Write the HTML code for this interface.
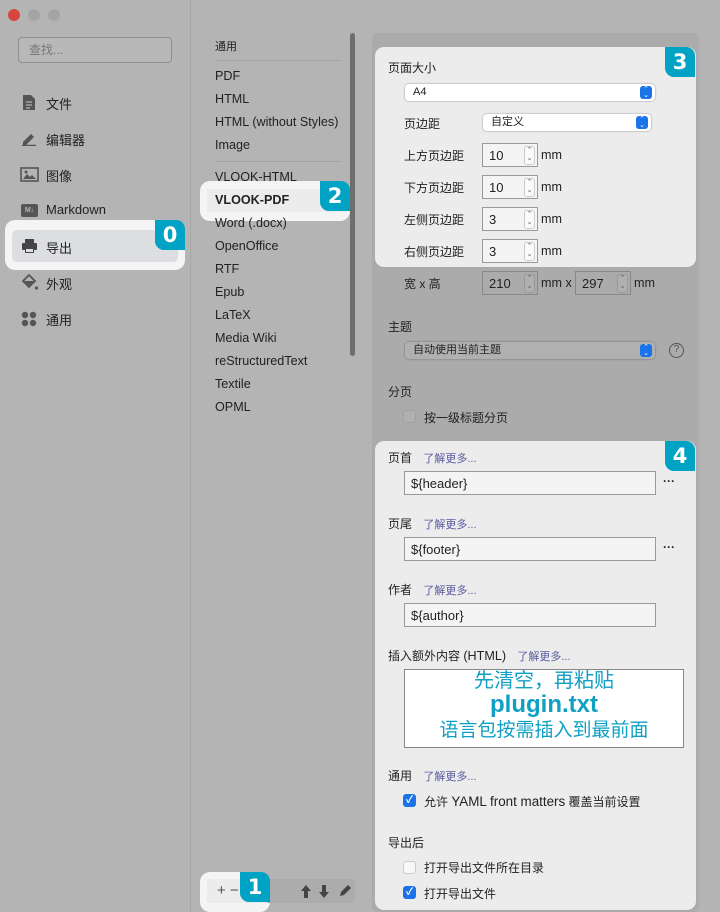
<!DOCTYPE html>
<html><head><meta charset="utf-8"><style>
*{margin:0;padding:0;box-sizing:border-box}
body{width:720px;height:912px;overflow:hidden;background:#b4b4b4;font-family:"Liberation Sans","Noto Sans CJK SC",sans-serif;font-size:12px;color:#222;position:relative}
.a{position:absolute;white-space:nowrap}
.m{font-size:12.6px}
.badge{position:absolute;width:30px;height:30px;background:#00a3c4;color:#fff;font-weight:bold;font-size:21px;text-align:center;line-height:30px;border-radius:0 9px 0 9px;font-family:"DejaVu Sans",sans-serif}
.hl{position:absolute;background:#ececec}
.inp{position:absolute;background:#f4f4f4;border:1px solid #9a9a9a;height:24px;padding-left:6px;line-height:23px;font-size:13px}
.step{position:absolute;width:11px;height:19px;border:1px solid #ccc;border-radius:3px;background:#fafafa;font-size:7px;line-height:8px;text-align:center;color:#555}
.sel{position:absolute;height:17px;background:#fff;border-radius:4px;box-shadow:0 0 1px 1px rgba(0,0,0,.15);padding-left:8px;line-height:17px;font-size:11px}
.sel i{position:absolute;right:3px;top:2px;width:12px;height:13px;border-radius:3px;background:#1a73e8;color:#fff;font-style:normal;font-size:7px;line-height:6px;text-align:center;padding-top:1px}
.link{color:#5a5aa0}
.cb{position:absolute;width:13px;height:13px;border-radius:3px;border:1px solid #ccc;background:#f8f8f8}
.cb.on{background:#1a73e8;border-color:#1a73e8;color:#fff;font-size:10px;line-height:12px;text-align:center;font-weight:bold}
</style></head><body>
<div class="a" style="left:8px;top:9px;width:12px;height:12px;border-radius:50%;background:#d6453f"></div>
<div class="a" style="left:28px;top:9px;width:12px;height:12px;border-radius:50%;background:#a4a4a4"></div>
<div class="a" style="left:48px;top:9px;width:12px;height:12px;border-radius:50%;background:#a4a4a4"></div>
<div class="a" style="left:190px;top:0;width:1px;height:912px;background:#a8a8a8"></div>
<div class="a" style="left:18px;top:37px;width:154px;height:26px;border:1px solid #8f8f8f;border-radius:4px;background:#b8b8b8;color:#777;padding-left:10px;line-height:24px;font-size:12px">查找...</div>
<svg class="a" style="left:22px;top:94px" width="14" height="17"><path d="M1 1h8l4 4v11H1z" fill="#555"/><path d="M4 8h6M4 11h6M4 14h4" stroke="#b4b4b4" stroke-width="1.2"/></svg>
<div class="a" style="left:46px;top:94px;font-size:13px">文件</div>
<svg class="a" style="left:21px;top:131px" width="16" height="15"><path d="M2 11l8-8 3 3-8 8H2z" fill="#555"/><path d="M1 14.5h14" stroke="#555" stroke-width="1.5"/></svg>
<div class="a" style="left:46px;top:130px;font-size:13px">编辑器</div>
<svg class="a" style="left:20px;top:167px" width="19" height="15"><rect x="1" y="1" width="17" height="13" fill="none" stroke="#555" stroke-width="1.6"/><path d="M3 12l4-5 3 3 2-2 4 4z" fill="#555"/><circle cx="6" cy="5" r="1.5" fill="#555"/></svg>
<div class="a" style="left:46px;top:166px;font-size:13px">图像</div>
<div class="a" style="left:21px;top:204px;width:17px;height:13px;background:#555;border-radius:2px;color:#b4b4b4;font-size:7px;font-weight:bold;line-height:13px;text-align:center">M↓</div>
<div class="a" style="left:46px;top:202px;font-size:13px">Markdown</div>
<div class="hl" style="left:5px;top:220px;width:180px;height:50px;border-radius:10px;background:#f4f4f4"></div>
<div class="a" style="left:12px;top:230px;width:166px;height:32px;border-radius:5px;background:#dcdee1"></div>
<svg class="a" style="left:21px;top:238px" width="17" height="16"><rect x="4" y="1" width="9" height="4" fill="#444"/><rect x="1" y="5" width="15" height="7" rx="1" fill="#444"/><rect x="4" y="10" width="9" height="5" fill="#444"/><rect x="5" y="11" width="7" height="3" fill="#dcdee1"/></svg>
<div class="a" style="left:46px;top:238px;font-size:13px">导出</div>
<div class="badge" style="left:155px;top:220px">0</div>
<svg class="a" style="left:21px;top:274px" width="18" height="17"><path d="M8 1l6 6-6 6-6-6z" fill="none" stroke="#555" stroke-width="1.8"/><path d="M2 7h12l-6 6z" fill="#555"/><circle cx="15.5" cy="14" r="1.6" fill="#555"/></svg>
<div class="a" style="left:46px;top:274px;font-size:13px">外观</div>
<svg class="a" style="left:21px;top:311px" width="16" height="16"><circle cx="4" cy="4" r="3.2" fill="#555"/><circle cx="12" cy="4" r="3.2" fill="#555"/><circle cx="4" cy="12" r="3.2" fill="#555"/><circle cx="12" cy="12" r="3.2" fill="#555"/></svg>
<div class="a" style="left:46px;top:310px;font-size:13px">通用</div>
<div class="a" style="left:215px;top:38px;font-size:11px">通用</div>
<div class="a" style="left:215px;top:60px;width:126px;height:1px;background:#a2a2a2"></div>
<div class="a m" style="left:215px;top:69px">PDF</div>
<div class="a m" style="left:215px;top:92px">HTML</div>
<div class="a m" style="left:215px;top:115px">HTML (without Styles)</div>
<div class="a m" style="left:215px;top:138px">Image</div>
<div class="a" style="left:215px;top:161px;width:126px;height:1px;background:#a2a2a2"></div>
<div class="a m" style="left:215px;top:170px">VLOOK-HTML</div>
<div class="hl" style="left:200px;top:181px;width:150px;height:40px;border-radius:10px;background:#f4f4f4"></div>
<div class="a" style="left:207px;top:189px;width:140px;height:23px;background:#ececec"></div>
<div class="a m" style="left:215px;top:193px;font-weight:bold">VLOOK-PDF</div>
<div class="badge" style="left:320px;top:181px">2</div>
<div class="a m" style="left:215px;top:216px">Word (.docx)</div>
<div class="a m" style="left:215px;top:239px">OpenOffice</div>
<div class="a m" style="left:215px;top:262px">RTF</div>
<div class="a m" style="left:215px;top:285px">Epub</div>
<div class="a m" style="left:215px;top:308px">LaTeX</div>
<div class="a m" style="left:215px;top:331px">Media Wiki</div>
<div class="a m" style="left:215px;top:354px">reStructuredText</div>
<div class="a m" style="left:215px;top:377px">Textile</div>
<div class="a m" style="left:215px;top:400px">OPML</div>
<div class="a" style="left:350px;top:33px;width:5px;height:323px;border-radius:3px;background:#6e6e6e"></div>
<div class="hl" style="left:200px;top:872px;width:70px;height:40px;border-radius:10px;background:#f4f4f4"></div>
<div class="a" style="left:207px;top:879px;width:148px;height:24px;background:#acacac;border-radius:3px"></div>
<div class="a" style="left:207px;top:879px;width:60px;height:24px;background:#ececec;border-radius:3px 0 0 3px"></div>
<div class="a" style="left:217px;top:882px;font-size:15px;color:#555">+ −</div>
<div class="badge" style="left:240px;top:872px">1</div>
<svg class="a" style="left:300px;top:884px" width="34" height="15"><path d="M6 1l5 6H8v7H4V7H1z M24 14l5-6h-3V1h-4v7h-3z" fill="#444"/></svg>
<svg class="a" style="left:338px;top:884px" width="14" height="14"><path d="M2 12l1-4 7-7 3 3-7 7z" fill="#444"/></svg>
<div class="a" style="left:372px;top:33px;width:327px;height:879px;background:#ababab;border-radius:6px"></div>
<div class="hl" style="left:375px;top:47px;width:321px;height:220px;border-radius:9px"></div>
<div class="badge" style="left:665px;top:47px">3</div>
<div class="a" style="left:388px;top:59px;font-size:12px">页面大小</div>
<div class="sel" style="left:405px;top:84px;width:250px">A4<i>⌃<br>⌄</i></div>
<div class="a" style="left:404px;top:115px">页边距</div>
<div class="sel" style="left:483px;top:114px;width:168px">自定义<i>⌃<br>⌄</i></div>
<div class="a" style="left:404px;top:147px">上方页边距</div>
<div class="inp" style="left:482px;top:143px;width:56px">10</div><div class="step" style="left:524px;top:146px">⌃<br>⌄</div><div class="a m" style="left:541px;top:148px">mm</div>
<div class="a" style="left:404px;top:179px">下方页边距</div>
<div class="inp" style="left:482px;top:175px;width:56px">10</div><div class="step" style="left:524px;top:178px">⌃<br>⌄</div><div class="a m" style="left:541px;top:180px">mm</div>
<div class="a" style="left:404px;top:211px">左侧页边距</div>
<div class="inp" style="left:482px;top:207px;width:56px">3</div><div class="step" style="left:524px;top:210px">⌃<br>⌄</div><div class="a m" style="left:541px;top:212px">mm</div>
<div class="a" style="left:404px;top:243px">右侧页边距</div>
<div class="inp" style="left:482px;top:239px;width:56px">3</div><div class="step" style="left:524px;top:242px">⌃<br>⌄</div><div class="a m" style="left:541px;top:244px">mm</div>
<div class="a" style="left:404px;top:275px">宽 x 高</div>
<div class="inp" style="left:482px;top:271px;width:56px;background:#ababab;border-color:#888">210</div><div class="step" style="left:524px;top:274px;background:#b0b0b0;border-color:#999">⌃<br>⌄</div><div class="a m" style="left:541px;top:276px">mm x</div>
<div class="inp" style="left:575px;top:271px;width:56px;background:#ababab;border-color:#888">297</div><div class="step" style="left:617px;top:274px;background:#b0b0b0;border-color:#999">⌃<br>⌄</div><div class="a m" style="left:634px;top:276px">mm</div>
<div class="a" style="left:388px;top:318px">主题</div>
<div class="sel" style="left:405px;top:342px;width:250px;background:#b0b0b0">自动使用当前主题<i>⌃<br>⌄</i></div>
<div class="a" style="left:669px;top:343px;width:15px;height:15px;border:1.5px solid #555;border-radius:50%;font-size:10px;line-height:12px;text-align:center;color:#555">?</div>
<div class="a" style="left:388px;top:383px">分页</div>
<div class="cb" style="left:403px;top:410px;background:#b0b0b0;border-color:#a0a0a0"></div>
<div class="a" style="left:424px;top:409px">按一级标题分页</div>
<div class="hl" style="left:375px;top:441px;width:321px;height:469px;border-radius:9px"></div>
<div class="badge" style="left:665px;top:441px">4</div>
<div class="a" style="left:388px;top:449px">页首 <span class="link" style="margin-left:8px;font-size:11px">了解更多...</span></div>
<div class="inp" style="left:404px;top:471px;width:252px">${header}</div>
<div class="a" style="left:663px;top:474px;font-weight:bold">···</div>
<div class="a" style="left:388px;top:515px">页尾 <span class="link" style="margin-left:8px;font-size:11px">了解更多...</span></div>
<div class="inp" style="left:404px;top:537px;width:252px">${footer}</div>
<div class="a" style="left:663px;top:540px;font-weight:bold">···</div>
<div class="a" style="left:388px;top:581px">作者 <span class="link" style="margin-left:8px;font-size:11px">了解更多...</span></div>
<div class="inp" style="left:404px;top:603px;width:252px">${author}</div>
<div class="a" style="left:388px;top:647px">插入额外内容 <span class="m">(HTML)</span> <span class="link" style="margin-left:8px;font-size:11px">了解更多...</span></div>
<div class="a" style="left:404px;top:669px;width:280px;height:79px;background:#fff;border:1px solid #888;text-align:center;color:#10a0c4;line-height:1">
<div style="font-size:20px;margin-top:1px">先清空，再粘贴</div>
<div style="font-size:24px;font-weight:bold;margin-top:2px">plugin.txt</div>
<div style="font-size:19px;margin-top:4px">语言包按需插入到最前面</div></div>
<div class="a" style="left:388px;top:767px">通用 <span class="link" style="margin-left:8px;font-size:11px">了解更多...</span></div>
<div class="cb on" style="left:403px;top:794px">✓</div>
<div class="a" style="left:424px;top:793px">允许 <span style="font-size:13.4px">YAML front matters</span> 覆盖当前设置</div>
<div class="a" style="left:388px;top:834px">导出后</div>
<div class="cb" style="left:403px;top:861px"></div>
<div class="a" style="left:424px;top:859px">打开导出文件所在目录</div>
<div class="cb on" style="left:403px;top:886px">✓</div>
<div class="a" style="left:424px;top:885px">打开导出文件</div>
</body></html>
